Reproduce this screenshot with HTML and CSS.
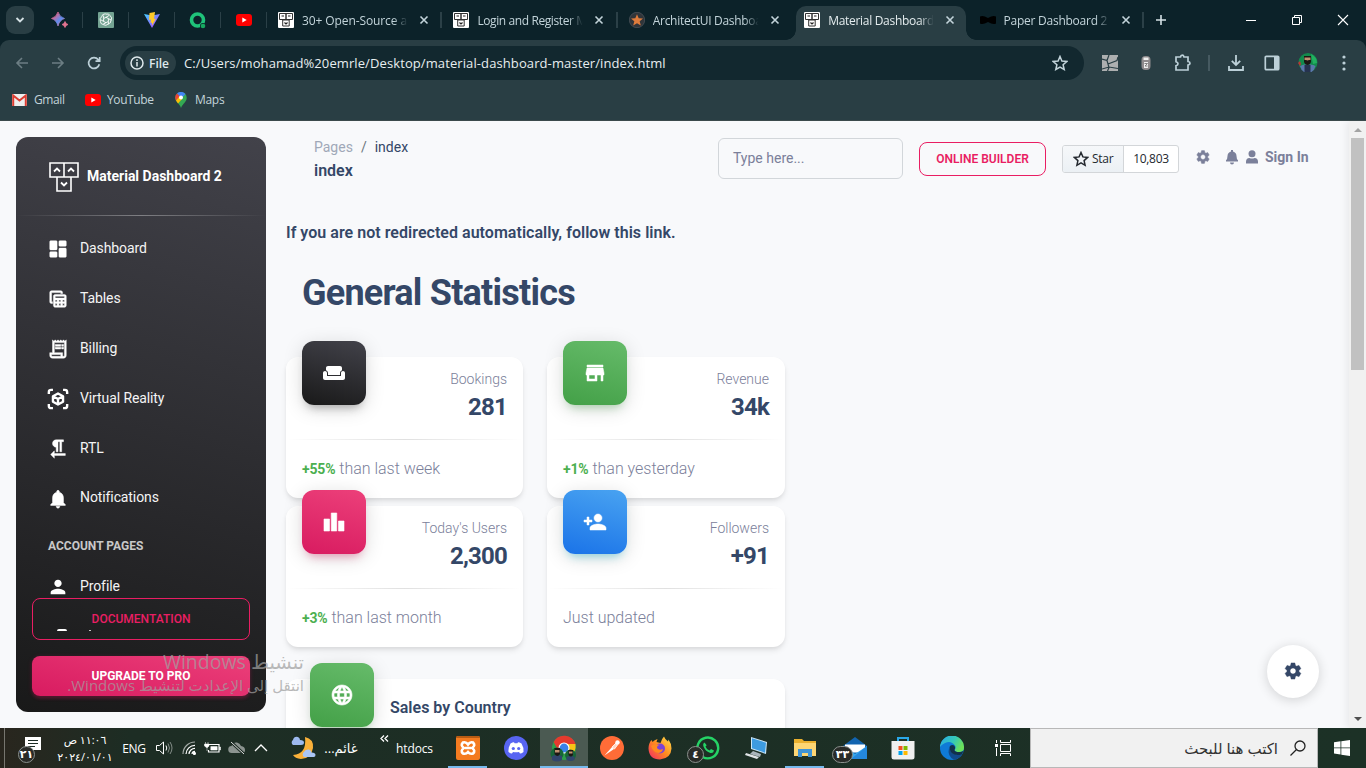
FILE: index.html
```html
<!DOCTYPE html>
<html lang="en">
<head>
<meta charset="utf-8">
<title>Material Dashboard 2</title>
<link rel="stylesheet" href="styles.css">
</head>
<body>
<svg class="defs" width="0" height="0">
  <defs>
    <linearGradient id="gSpark" x1="0" y1="0" x2="1" y2="1"><stop offset="0" stop-color="#e0607e"/><stop offset=".2" stop-color="#d9658c"/><stop offset=".5" stop-color="#5b8def"/><stop offset=".75" stop-color="#e57390"/></linearGradient>
    <linearGradient id="gVite" x1="0" y1="0" x2="1" y2="1"><stop offset="0" stop-color="#41d1ff"/><stop offset="1" stop-color="#bd34fe"/></linearGradient>
    <linearGradient id="gFox" x1="1" y1="0" x2="0" y2="1"><stop offset="0" stop-color="#ffe14d"/><stop offset=".5" stop-color="#ff8a1f"/><stop offset="1" stop-color="#f0246a"/></linearGradient>
    <linearGradient id="gEdge" x1="0" y1="0" x2="1" y2=".4"><stop offset="0" stop-color="#27a9e8"/><stop offset=".6" stop-color="#35c8b8"/><stop offset="1" stop-color="#6be05a"/></linearGradient>
    <symbol id="creative" viewBox="0 0 30 30"><g fill="none" stroke="currentColor" stroke-width="1.6"><path d="M1 1h14v14H1zM15 1h14v14H15zM8 15h14v14H8z"/><path d="M5 9.5l3-3 3 3M19 9.5l3-3 3 3M12 20.500l3 3 3-3" stroke-width="1.8"/></g></symbol>
    <symbol id="fav" viewBox="0 0 16 16"><rect width="16" height="16" rx="1" fill="#fff"/><path d="M1.500 1.500h6.500v6H1.500zM8 1.500h6.500v6H8zM4.700 8h6.500v6H4.700z" fill="none" stroke="#333"/><path d="M3.500 4h2.500M10 4h2.500M6.500 10.500L8 12l1.500-1.500" fill="none" stroke="#222" stroke-width="1.200"/></symbol>
    <symbol id="x" viewBox="0 0 10 10"><path d="M1.500 1.500l7 7M8.500 1.500l-7 7" stroke="currentColor" stroke-width="1.600" fill="none"/></symbol>
    <symbol id="yt" viewBox="0 0 16 12"><rect width="16" height="12" rx="3" fill="#f00"/><path d="M6.300 3.500v5l4.400-2.500z" fill="#fff"/></symbol>
    <symbol id="gear" viewBox="0 0 24 24"><path fill="currentColor" d="M19.140 12.940c.04-.3.06-.61.06-.94 0-.32-.02-.64-.07-.94l2.030-1.580c.18-.14.23-.41.12-.61l-1.920-3.320c-.12-.22-.37-.29-.59-.22l-2.390.96c-.5-.38-1.030-.7-1.620-.94l-.36-2.540c-.04-.24-.24-.41-.48-.41h-3.840c-.24 0-.43.17-.47.41l-.36 2.540c-.59.24-1.130.57-1.620.94l-2.390-.96c-.22-.08-.47 0-.59.22L2.740 8.870c-.12.21-.08.47.12.61l2.030 1.580c-.05.3-.09.63-.09.94s.02.64.07.94l-2.030 1.580c-.18.14-.23.41-.12.61l1.920 3.320c.12.22.37.29.59.22l2.390-.96c.5.38 1.030.7 1.620.94l.36 2.540c.05.24.24.41.48.41h3.840c.24 0 .44-.17.47-.41l.36-2.540c.59-.24 1.130-.56 1.620-.94l2.390.96c.22.08.47 0 .59-.22l1.920-3.320c.12-.22.07-.47-.12-.61l-2.010-1.580zM12 15.600c-1.980 0-3.600-1.620-3.600-3.600s1.620-3.600 3.600-3.600 3.600 1.620 3.600 3.600-1.620 3.600-3.600 3.600z" stroke="currentColor" stroke-width=".6"/></symbol>
    <symbol id="bell" viewBox="0 0 24 24"><path fill="currentColor" d="M12 22c1.100 0 2-.9 2-2h-4c0 1.100.89 2 2 2zm6-6v-5c0-3.070-1.640-5.640-4.500-6.320V4c0-.83-.67-1.500-1.500-1.500s-1.500.67-1.500 1.500v.68C7.630 5.360 6 7.920 6 11v5l-2 2v1h16v-1l-2-2z"/></symbol>
    <symbol id="person" viewBox="0 0 24 24"><path fill="currentColor" d="M12 12c2.210 0 4-1.790 4-4s-1.790-4-4-4-4 1.790-4 4 1.790 4 4 4zm0 2c-2.670 0-8 1.340-8 4v2h16v-2c0-2.660-5.330-4-8-4z"/></symbol>
  </defs>
</svg>

<header class="browser">
  <div class="tabstrip">
    <div class="tab-search"><svg width="10" height="8" viewBox="0 0 10 8"><path d="M1.500 2L5 5.500 8.500 2" fill="none" stroke="#d5e1e5" stroke-width="1.800"/></svg></div>
    <div class="pin"><svg width="18" height="18" viewBox="0 0 18 18"><path d="M7 1q1.500 5 6.500 6.500Q8.500 9 7 15 5.500 9 .5 7.500 5.500 6 7 1zM14 10.500q.8 2.500 3 3-2.200.5-3 3-.8-2.500-3-3 2.200-.5 3-3z" fill="url(#gSpark)" stroke="url(#gSpark)" stroke-width=".8"/></svg></div>
    <div class="pin"><svg width="16" height="16" viewBox="0 0 16 16"><rect width="16" height="16" rx="1" fill="#74a392"/><g fill="none" stroke="#fff" stroke-width=".9"><path d="M8 2.200q3-1.200 4.200 1.600 2.500 1.800.8 4.600 0 3-2.800 3.600-2.200 2.400-4.800.6-3-.4-3-3.200-1.200-3 1.200-4.600.6-3 3.600-3z"/><path d="M8 5.300l2.400 1.300v2.800L8 10.700 5.600 9.400V6.600zM5.600 6.600V3.500M8 5.300l3-1.800M10.400 6.600l3 1.600M10.400 9.400v3M8 10.700l-3 1.600M5.600 9.400L2.800 7.800"/></g></svg></div>
    <div class="pin"><svg width="16" height="16" viewBox="0 0 16 16"><path d="M0 2l8 14 8-14-8 1.500z" fill="url(#gVite)"/><path d="M11 0L5.500 1 5 8l2-.5L6.500 11l1.500-.5v3l4-7-2 .4z" fill="#ffc928"/></svg></div>
    <div class="pin"><svg width="17" height="17" viewBox="0 0 17 17"><circle cx="8.500" cy="8" r="6" fill="none" stroke="#1fc37a" stroke-width="3.600"/><circle cx="14" cy="14" r="3" fill="#0c2229"/><circle cx="14" cy="14" r="2.300" fill="#17a860"/></svg></div>
    <div class="pin"><svg width="16" height="12"><use href="#yt"/></svg></div>
    <div class="tab"><svg width="16" height="16"><use href="#fav"/></svg><span class="t t1">30+ Open-Source a</span><svg class="close" width="10" height="10"><use href="#x"/></svg></div>
    <div class="tab"><svg width="16" height="16"><use href="#fav"/></svg><span class="t t2">Login and Register M</span><svg class="close" width="10" height="10"><use href="#x"/></svg></div>
    <div class="tab nosep"><svg width="16" height="16" viewBox="0 0 16 16"><circle cx="8" cy="8" r="7.700" fill="#30353a" stroke="#596066" stroke-width=".6"/><path d="M8 2.200l1.700 4 4.300.3-3.300 2.800 1.100 4.200L8 11.200l-3.800 2.300 1.100-4.200L2 6.500l4.300-.3z" fill="#de7c3c"/></svg><span class="t t3">ArchitectUI Dashboa</span><svg class="close" width="10" height="10"><use href="#x"/></svg></div>
    <div class="tab active"><svg width="16" height="16"><use href="#fav"/></svg><span class="t t4">Material Dashboard</span><svg class="close" width="10" height="10"><use href="#x"/></svg></div>
    <div class="tab"><svg width="16" height="16" viewBox="0 0 16 16"><path d="M0 4.500q3-1.500 8 1.500 5-3 8-1.500v7q-3 1.500-8-1.500-5 3-8 1.500z" fill="#000"/></svg><span class="t t5">Paper Dashboard 2</span><svg class="close" width="10" height="10"><use href="#x"/></svg></div>
    <svg class="plus" width="12" height="12" viewBox="0 0 12 12"><path d="M6 1v10M1 6h10" stroke="#d5e1e5" stroke-width="1.600"/></svg>
    <div class="win">
      <svg width="12" height="12" viewBox="0 0 12 12"><path d="M1 6.500h10" stroke="#fff"/></svg>
      <svg width="12" height="12" viewBox="0 0 12 12" fill="none" stroke="#fff"><path d="M1.500 3.500h7v7h-7zM3.500 3.500v-2h7v7h-2"/></svg>
      <svg width="12" height="12" viewBox="0 0 12 12"><path d="M1 1l10 10M11 1L1 11" stroke="#fff" stroke-width="1.100"/></svg>
    </div>
  </div>
  <div class="toolbar">
    <div class="slot dim"><svg width="14" height="14" viewBox="0 0 14 14"><path d="M13 7H2M7 2L2 7l5 5" fill="none" stroke="currentColor" stroke-width="1.600"/></svg></div>
    <div class="slot dim"><svg width="14" height="14" viewBox="0 0 14 14"><path d="M1 7h11M7 2l5 5-5 5" fill="none" stroke="currentColor" stroke-width="1.600"/></svg></div>
    <div class="slot"><svg width="14" height="14" viewBox="0 0 14 14"><path d="M12.300 8.200A5.400 5.400 0 1 1 11.200 3.600L12.500 5M12.700 1v4.200H8.500" fill="none" stroke="currentColor" stroke-width="1.700"/></svg></div>
    <div class="omnibox">
      <div class="chip"><svg width="14" height="14" viewBox="0 0 14 14"><circle cx="7" cy="7" r="6" fill="none" stroke="#dfe9ec" stroke-width="1.500"/><path d="M7 6v4.500M7 3.300V5" stroke="#dfe9ec" stroke-width="1.500"/></svg><b>File</b></div>
      <span class="url">C:/Users/mohamad%20emrle/Desktop/material-dashboard-master/index.html</span>
      <svg class="bm" width="16" height="16" viewBox="0 0 16 16"><path d="M8 1.500l1.900 4.600 4.900.4-3.700 3.200 1.100 4.800L8 12l-4.200 2.500 1.100-4.800L1.200 6.500l4.900-.4z" fill="none" stroke="#c3d4da" stroke-width="1.500"/></svg>
    </div>
    <div class="slot"><svg width="16" height="16" viewBox="0 0 16 16"><rect width="16" height="16" fill="#adafb0"/><path d="M0 4l5 1.500 2 7L5.500 16M5 5.500L7 0M6 9l9-3.500L16 2M0 14l7-2 9 1.500" stroke="#293e44" fill="none" stroke-width="1.200"/></svg></div>
    <div class="slot"><svg width="10" height="16" viewBox="0 0 10 16"><rect x=".5" y="1" width="9" height="14" rx="4" fill="#8f8b8d"/><path d="M2.500 2.500h5v2.500h-5zM3 7h4v6H3z" fill="#eee"/><path d="M3.500 8.500h3L4 11h2.500" stroke="#666" fill="none" stroke-width=".8"/></svg></div>
    <div class="slot"><svg class="puzzle" width="18" height="18" viewBox="0 0 18 18"><path d="M2 3h4.500q.3-1.800 1.700-1.800T10 3h4v4.500q2 .3 2 1.700t-2 1.800v5H2v-4.300q2-.5 2-2t-2-2z" fill="none" stroke="currentColor" stroke-width="1.700"/></svg></div>
    <div class="divider"></div>
    <div class="slot"><svg width="18" height="18" viewBox="0 0 18 18"><path d="M9 1v9.500M4.800 6.800L9 11l4.200-4.200M2 12v4h14v-4" fill="none" stroke="currentColor" stroke-width="1.800"/></svg></div>
    <div class="slot"><svg width="16" height="16" viewBox="0 0 16 16"><rect x="1.300" y="1.300" width="13.400" height="13.400" rx="1" fill="none" stroke="currentColor" stroke-width="1.700"/><path d="M10 1h5v14h-5z" fill="currentColor"/></svg></div>
    <div class="slot"><svg width="20" height="20" viewBox="0 0 20 20"><circle cx="10" cy="9.500" r="9.500" fill="#128a4c"/><path d="M13 1q6 3 6 9l-4 1z" fill="#23b060"/><path d="M2 13q3-1.500 4.500-1.500h6q3 0 5 1.500-1 4-4 6H6q-3-2-4-6z" fill="#5a78ab"/><path d="M6.500 12h6v7h-6z" fill="#26334f"/><path d="M6 3h7v6q-1 3-3.500 3T6 9z" fill="#1c1714"/><path d="M6.500 4.500h6V7h-1.500q-1.500.8-3 0H6.500z" fill="#c09070"/><path d="M0 10l2-2 1 3-1 2z" fill="#b33"/></svg></div>
    <div class="slot"><svg width="4" height="16" viewBox="0 0 4 16" fill="currentColor"><circle cx="2" cy="2" r="1.600"/><circle cx="2" cy="8" r="1.600"/><circle cx="2" cy="14" r="1.600"/></svg></div>
  </div>
  <div class="bookmarks">
    <a class="b1"><svg width="15" height="12" viewBox="0 0 15 12"><rect width="15" height="12" rx="1" fill="#eee"/><path d="M1.200 12V1.500l6.300 5 6.300-5V12" fill="none" stroke="#dc3d32" stroke-width="2"/></svg><span>Gmail</span></a>
    <a class="b2"><svg width="16" height="12"><use href="#yt"/></svg><span>YouTube</span></a>
    <a class="b3"><svg width="12" height="16" viewBox="0 0 12 16"><path d="M6 0a5.700 5.700 0 0 1 5.700 5.700C11.700 10 8 11 6 16 4.500 11 .3 10 .3 5.700A5.700 5.700 0 0 1 6 0z" fill="#34a853"/><path d="M2 1.600A5.700 5.700 0 0 1 10.500 2L6 7z" fill="#4285f4"/><path d="M2 1.600L5 4.500 1 8.700Q-1 4.500 2 1.600z" fill="#ea4335"/><path d="M1 8.500L4 5l3 2-4 4.500z" fill="#fbbc04"/><circle cx="6" cy="5.600" r="2" fill="#fff"/></svg><span>Maps</span></a>
  </div>
</header>

<div class="page">
  <aside class="sidebar">
    <div class="brand"><svg width="30" height="30"><use href="#creative"/></svg><b>Material Dashboard 2</b></div>
    <hr>
    <nav>
      <a><svg class="mi" viewBox="0 0 24 24"><path d="M4 13h6q1 0 1-1V4q0-1-1-1H4Q3 3 3 4v8q0 1 1 1zm0 8h6q1 0 1-1v-4q0-1-1-1H4q-1 0-1 1v4q0 1 1 1zm10 0h6q1 0 1-1v-8q0-1-1-1h-6q-1 0-1 1v8q0 1 1 1zM13 4v4q0 1 1 1h6q1 0 1-1V4q0-1-1-1h-6q-1 0-1 1z"/></svg><span>Dashboard</span></a>
      <a><svg class="mi" viewBox="0 0 24 24"><path d="M19 7H9c-1.100 0-2 .9-2 2v10c0 1.100.9 2 2 2h10c1.100 0 2-.9 2-2V9c0-1.100-.9-2-2-2zm0 2v2H9V9h10zm-6 6v-2h2v2h-2zm2 2v2h-2v-2h2zm-4-2H9v-2h2v2zm6-2h2v2h-2v-2zm-8 4h2v2H9v-2zm8 2v-2h2v2h-2zM6 17H5c-1.100 0-2-.9-2-2V5c0-1.100.9-2 2-2h10c1.100 0 2 .9 2 2v1h-2V5H5v10h1v2z"/></svg><span>Tables</span></a>
      <a><svg class="mi" viewBox="0 0 24 24"><path d="M19.500 3.500L18 2l-1.500 1.500L15 2l-1.500 1.500L12 2l-1.500 1.500L9 2 7.500 3.500 6 2v14H3v3c0 1.660 1.340 3 3 3h12c1.660 0 3-1.340 3-3V2l-1.500 1.500zM15 20H6c-.55 0-1-.45-1-1v-1h10v2zm4-1c0 .55-.45 1-1 1s-1-.45-1-1v-3H8V5h11v14zM9 7h6v2H9zM16 7h2v2h-2zM9 10h6v2H9zM16 10h2v2h-2z"/></svg><span>Billing</span></a>
      <a><svg class="mi bare" viewBox="0 0 24 24"><g fill="none" stroke="#fff" stroke-width="2.600" stroke-linejoin="round"><path d="M2 6.500V4.500q0-2.500 2.500-2.500h2M17.500 2h2q2.500 0 2.500 2.500v2M22 17.500v2q0 2.500-2.500 2.500h-2M6.500 22h-2q-2.500 0-2.500-2.500v-2"/><path d="M12 6l5.500 3v6L12 18l-5.500-3V9zM6.500 9L12 12l5.500-3M12 12v6"/></g></svg><span>Virtual Reality</span></a>
      <a><svg class="mi" viewBox="0 0 24 24"><path d="M10 10v5h2V4h2v11h2V4h2V2h-8C7.790 2 6 3.790 6 6s1.790 4 4 4zm-2 7v-3l-4 4 4 4v-3h12v-2H8z"/></svg><span>RTL</span></a>
      <a><svg class="mi"><use href="#bell"/></svg><span>Notifications</span></a>
    </nav>
    <h6>ACCOUNT PAGES</h6>
    <a class="profile"><svg class="mi bare"><use href="#person"/></svg><span>Profile</span></a>
    <a class="btn-doc">DOCUMENTATION<i class="peek p1"></i><i class="peek p2"></i></a>
    <a class="btn-pro">UPGRADE TO PRO</a>
  </aside>

  <main>
    <div class="navbar">
      <div class="crumbs"><div><span class="muted">Pages</span><span class="slash">/</span><span>index</span></div><b>index</b></div>
      <div class="field">Type here...</div>
      <a class="builder">ONLINE BUILDER</a>
      <div class="gh"><span class="star"><svg width="16" height="16" viewBox="0 0 16 16"><path d="M8 1.500l1.900 4.400 4.700.5-3.500 3.200 1 4.700L8 11.900l-4.100 2.400 1-4.700L1.400 6.400l4.700-.5z" fill="none" stroke="#24292f" stroke-width="1.500"/></svg>Star</span><span class="count">10,803</span></div>
      <svg class="ni g" width="16" height="16"><use href="#gear"/></svg>
      <svg class="ni n" width="16" height="16" viewBox="0 0 16 16"><path d="M8 15.500a2 2 0 0 0 2-2H6a2 2 0 0 0 2 2zM9 2.500V1H7v1.500Q3.500 3.500 3.500 7 3.500 10 2 11.200V12.500h12v-1.300Q12.500 10 12.500 7 12.500 3.500 9 2.500z" fill="currentColor"/></svg>
      <svg class="ni u" width="14" height="16" viewBox="0 0 14 16"><circle cx="7" cy="4.700" r="3.500" fill="currentColor"/><path d="M1 14.500v-1.700q0-3.500 3.500-3.800 2.500 1 5 0 3.500.3 3.500 3.800v1.700z" fill="currentColor"/></svg>
      <b class="sign">Sign In</b>
    </div>
    <p class="redirect">If you are not redirected automatically, follow this link.</p>
    <h1>General Statistics</h1>
    <div class="cards">
      <section class="card"><div class="tile dark"><svg viewBox="0 0 24 24"><path d="M21 10c-1.100 0-2 .9-2 2v3H5v-3c0-1.100-.9-2-2-2s-2 .9-2 2v5c0 1.100.9 2 2 2h18c1.100 0 2-.9 2-2v-5c0-1.100-.9-2-2-2zm-3-5H6c-1.100 0-2 .9-2 2v2.150c1.160.41 2 1.510 2 2.820V14h12v-2.030c0-1.300.84-2.400 2-2.820V7c0-1.100-.9-2-2-2z"/></svg></div><div class="stat"><span>Bookings</span><b>281</b></div><hr><p><b>+55%</b> than last week</p></section>
      <section class="card"><div class="tile green"><svg viewBox="0 0 24 24"><path d="M20 4H4v2h16V4zm1 10v-2l-1-5H4l-1 5v2h1v6h10v-6h4v6h2v-6h1zm-9 4H6v-4h6v4z" stroke="#fff" stroke-width=".5"/></svg></div><div class="stat"><span>Revenue</span><b>34k</b></div><hr><p><b>+1%</b> than yesterday</p></section>
      <section class="card"><div class="tile pink"><svg viewBox="0 0 24 24"><path d="M7.500 21H2V9h5.500v12zm7.250-18h-5.500v18h5.500V3zM22 11h-5.500v10H22V11z" stroke="#fff" stroke-width=".6"/></svg></div><div class="stat"><span>Today's Users</span><b>2,300</b></div><hr><p><b>+3%</b> than last month</p></section>
      <section class="card"><div class="tile blue"><svg viewBox="0 0 24 24"><path d="M15 12c2.210 0 4-1.790 4-4s-1.790-4-4-4-4 1.790-4 4 1.790 4 4 4zm-9-2V7H4v3H1v2h3v3h2v-3h3v-2H6zm9 4c-2.670 0-8 1.340-8 4v2h16v-2c0-2.660-5.330-4-8-4z" stroke="#fff" stroke-width=".5"/></svg></div><div class="stat"><span>Followers</span><b>+91</b></div><hr><p>Just updated</p></section>
    </div>
    <section class="sales"><div class="tile green"><svg viewBox="0 0 24 24"><path d="M11.990 2C6.470 2 2 6.480 2 12s4.470 10 9.990 10C17.520 22 22 17.520 22 12S17.520 2 11.990 2zm6.930 6h-2.950c-.32-1.250-.78-2.450-1.380-3.560 1.840.63 3.370 1.910 4.330 3.560zM12 4.040c.83 1.200 1.480 2.530 1.910 3.960h-3.820c.43-1.430 1.080-2.760 1.910-3.960zM4.260 14C4.100 13.360 4 12.690 4 12s.1-1.360.26-2h3.380c-.08.66-.14 1.320-.14 2 0 .68.06 1.340.14 2H4.260zm.82 2h2.950c.32 1.250.78 2.450 1.380 3.560-1.840-.63-3.370-1.900-4.330-3.560zm2.950-8H5.080c.96-1.660 2.490-2.930 4.330-3.560C8.810 5.550 8.350 6.750 8.030 8zM12 19.960c-.83-1.200-1.480-2.530-1.910-3.960h3.820c-.43 1.430-1.080 2.760-1.910 3.960zM14.340 14H9.660c-.09-.66-.16-1.320-.16-2 0-.68.07-1.350.16-2h4.680c.09.65.16 1.320.16 2 0 .68-.07 1.340-.16 2zm.25 5.560c.6-1.110 1.060-2.310 1.380-3.560h2.950c-.96 1.650-2.490 2.930-4.330 3.560zM16.360 14c.08-.66.14-1.320.14-2 0-.68-.06-1.340-.14-2h3.380c.16.64.26 1.310.26 2s-.1 1.360-.26 2h-3.380z" stroke="#fff" stroke-width=".6"/></svg></div><h2>Sales by Country</h2></section>
  </main>

  <div class="scrollbar"><i class="up"></i><i class="thumb"></i><i class="down"></i></div>
  <div class="fab"><svg width="20" height="20"><use href="#gear"/></svg></div>
  <div class="watermark"><div class="w1" dir="rtl">تنشيط Windows</div><div class="w2" dir="rtl">انتقل إلى الإعدادت لتنشيط Windows.</div></div>
</div>

<footer class="taskbar">
  <div class="tk action"><svg width="30" height="28" viewBox="0 0 30 28"><path d="M8 3h16v13H12l-4 4z" fill="#fff"/><path d="M11 6.500h10M11 9.500h10M11 12.500h7" stroke="#1c2c24" /></svg><span class="badge">٢١</span></div>
  <div class="tk clock" dir="rtl"><span>١١:٠٦ ص</span><span class="date">٢٠٢٤/٠١/٠١</span></div>
  <div class="tk eng">ENG</div>
  <div class="tk s1"><svg width="18" height="16" viewBox="0 0 18 16" fill="none" stroke="#fff"><path d="M1.500 5.500h3l4-3.500v12l-4-3.500h-3z"/><path d="M11 5.500q1.500 2.500 0 5"/><path d="M13 3.500q3 4.500 0 9M15 2q4 6 0 12" opacity=".45"/></svg></div>
  <div class="tk s2"><svg width="14" height="14" viewBox="0 0 14 14" fill="none" stroke="#fff" stroke-width="1.200"><path d="M1 13A12 12 0 0 1 13 1" opacity=".6"/><path d="M4 13A9 9 0 0 1 13 4.300M7 13a6 6 0 0 1 6-5.700M10 13a3 3 0 0 1 3-2.700"/><circle cx="12.400" cy="12.400" r="1" fill="#fff"/></svg></div>
  <div class="tk s3"><svg width="17" height="14" viewBox="0 0 17 14"><path d="M5 3.500h10v7.500H4.500V9" fill="none" stroke="#fff" stroke-width="1.200"/><path d="M6.800 5.500h6.400v3.600H6.800zM15.500 6h1v3h-1zM1.500 1v2M4 1v2M.5 3h4.500v2L3.500 6.500h-1L.5 5zM3 6v4" fill="#fff" stroke="#fff" stroke-width=".5"/></svg></div>
  <div class="tk s4"><svg width="18" height="14" viewBox="0 0 18 14"><path d="M4 12a3.500 3.500 0 0 1-.5-7Q5 1 9 1.500q3 .5 4 3.500 4 .5 4 4t-3 3z" fill="#8b938f"/><path d="M3 1l13 12" stroke="#1c2c24" stroke-width="3"/><path d="M3 1l13 12" stroke="#ddd"/></svg></div>
  <div class="tk s5"><svg width="14" height="8" viewBox="0 0 14 8"><path d="M1 7l6-6 6 6" fill="none" stroke="#fff" stroke-width="1.300"/></svg></div>
  <div class="tk wx"><svg width="26" height="24" viewBox="0 0 26 24"><path d="M15 1q9 2 8 11-2 11-12 11-6-.5-8-4 14-1 12-18z" fill="#fbb13a"/><path d="M3 9a3 3 0 0 1 0-5q1-4 5-3 2 1 2 3 4 0 4 2.500T11 9z" fill="#9db9ef"/><path d="M14 21a3 3 0 0 1 0-5q1-3 5-2.500 2 .5 2.500 3 4 0 4 2.500T23 21z" fill="#abc5f5"/></svg></div>
  <div class="tk wt" dir="rtl">غائم...</div>
  <div class="tk chev"><svg width="9" height="7" viewBox="0 0 9 7"><path d="M4 .5l-3 3 3 3M8 .5l-3 3 3 3" fill="none" stroke="#fff" stroke-width="1.300"/></svg></div>
  <div class="tk ht">htdocs</div>
  <div class="tk app run"><svg width="24" height="24" viewBox="0 0 24 24"><rect width="24" height="24" rx="2" fill="#f47b20"/><path d="M0 2q0-2 2-2h20q2 0 2 2z" fill="#b85b13"/><path d="M7 6.500q3-1 5 2 2-3 5-2 3 3-1 5.500 4 2.500 1 5.500-3 1-5-1.500-2 2.500-5 1.500-3-3 1-5.500-4-2.500-1-5.500zM9 12h6" fill="none" stroke="#fff" stroke-width="2.600"/></svg></div>
  <div class="tk app"><svg width="24" height="24" viewBox="0 0 24 24"><circle cx="12" cy="12" r="12" fill="#5865f2"/><path d="M6.500 7.500Q9 6 10 6.200l.6 1h2.800l.6-1q1-.2 3.500 1.300 2.500 4 2 8.500-2 1.500-3.500 1.500L15 16q-3 .7-6 0l-1 1.500q-1.500 0-3.500-1.500-.5-4.500 2-8.500z" fill="#fff"/><circle cx="9.300" cy="12.500" r="1.600" fill="#5865f2"/><circle cx="14.700" cy="12.500" r="1.600" fill="#5865f2"/></svg></div>
  <div class="tk app run full"><svg width="28" height="28" viewBox="0 0 28 28"><circle cx="14" cy="14" r="12" fill="#2f9e4c"/><path d="M3.600 8A12 12 0 0 1 25.500 10H14l-6 6z" fill="#e53a2e"/><path d="M14 10h11.500q1 8-6 14l-4-3z" fill="#fbc116"/><circle cx="14" cy="14" r="5.500" fill="#fff"/><circle cx="14" cy="14" r="4.400" fill="#3b82ea"/><circle cx="7" cy="20" r="6.500" fill="#176638"/><circle cx="20.500" cy="21" r="5.500" fill="#176638"/><path d="M2 22q5-2 10 0v4q-5 3-10 0zM16.500 23q4-2 8 0v3q-4 2-8 0z" fill="#31456d"/><path d="M4.500 14h5.500v6q-2.500 4-5.500 0zM18.500 16h4.500v5q-2 3-4.500 0z" fill="#1c1714"/><path d="M5 16h4.500v2.500H5zM19 17.500h3.500v2H19z" fill="#c09070"/></svg></div>
  <div class="tk app"><svg width="24" height="24" viewBox="0 0 24 24"><circle cx="12" cy="12" r="12" fill="#ff6c37"/><path d="M4.500 19.500l7.500-8.500 2 2z" fill="#fff"/><path d="M12 11l4-4 1.500 2-3 4z" fill="#ffd5c5" stroke="#fff" stroke-width=".8"/><circle cx="17.500" cy="6.500" r="2.200" fill="#fff"/></svg></div>
  <div class="tk app"><svg width="24" height="24" viewBox="0 0 24 24"><path d="M12 23.500q-11 0-11.500-11 0-5 3-8.500l1 2q2-2 5-3l-1 3 4 1q1-4 3.500-6.500 1 3 4 5l.5-2q3 4 3 9-.5 10-11.500 11z" fill="url(#gFox)"/><circle cx="12" cy="12.500" r="5" fill="#7b42d6"/><path d="M3 10q3-3 9-1-3 0-3 3 2 3 6 1-1 4-5 4-5-1-7-7z" fill="#ff8a1f"/></svg></div>
  <div class="tk app"><svg width="24" height="24" viewBox="0 0 24 24"><path d="M1.500 22.500L3 17.500a10.400 10.400 0 1 1 3.700 3.500z" fill="none" stroke="#25d366" stroke-width="2.400"/><path d="M8.500 6.500q-2 1-1 4 2 5 7 6.500 3 .5 3.500-2.500l-3-1.500-1.500 1.500q-3-1-4-4l1.200-1.300z" fill="#25d366"/></svg><span class="badge wa">٤</span></div>
  <div class="tk app pc"><svg width="24" height="24" viewBox="0 0 24 24"><path d="M6 1l16 5-1 12-15-5z" fill="#cde7f7"/><path d="M7 2.200l14 4.500-1 10L7 12.200z" fill="#3d9be0"/><path d="M8 15l8 3-1 3-10-3z" fill="#a9b4ba"/><path d="M1 17l13 4-2 2-12-4z" fill="#dfe4e6"/></svg></div>
  <div class="tk app run"><svg width="22" height="20" viewBox="0 0 22 20"><path d="M0 1h8l2 2h12v15H0z" fill="#eab02e"/><path d="M0 5h22v13H0z" fill="#fdd673"/><path d="M4 19v-8h14v8h-4v-4H8v4z" fill="#3f94d6"/></svg></div>
  <div class="tk app mail"><svg width="26" height="24" viewBox="0 0 26 24"><path d="M2 10L14 1l12 9v12H2z" fill="#1264b0"/><path d="M4 8.500h20v8H4z" fill="#fff"/><path d="M2 10l12 8 12-8v13H2z" fill="#35a8ef"/><path d="M26 10L10 23h16z" fill="#2488dc"/></svg><span class="badge ml">٣٣</span></div>
  <div class="tk app store"><svg width="24" height="24" viewBox="0 0 24 24"><path d="M7 6V2h10v4" fill="none" stroke="#2aa9ea" stroke-width="2"/><path d="M.500 5h23v16q0 2.500-2.500 2.500H3Q.5 23.500.5 21z" fill="#f0f0f0"/><path d="M7.500 10h4v4h-4z" fill="#f25022"/><path d="M12.500 10h4v4h-4z" fill="#7fba00"/><path d="M7.500 15h4v4h-4z" fill="#00a4ef"/><path d="M12.500 15h4v4h-4z" fill="#ffb900"/></svg></div>
  <div class="tk app edge"><svg width="24" height="24" viewBox="0 0 24 24"><circle cx="12" cy="12" r="12" fill="#0f7ad6"/><path d="M9 12q-2 8 5 11.800 5-.8 8-5Q13 20 9 12z" fill="#114a8b"/><path d="M0 11A12 12 0 0 1 24 12q0 4-5 4-4 0-4.500-2 2-2 .5-4.500Q11 4 5 7 1 9 0 11z" fill="url(#gEdge)"/><path d="M9.500 12q0-3 3-3 2 0 2.500 2 .3 1.500-.5 3 .5 2.500 6 2 2-.3 3-1.500l-1.500 4Q11 21 9.500 12z" fill="#12304a"/></svg></div>
  <div class="tk view"><svg width="16" height="16" viewBox="0 0 16 16" fill="none" stroke="#fff"><path d="M5.500 0v2.500h10V0M5.500 16v-2.500h10V16M5.500 4.500h10v7h-10zM1.500 0v3M1.500 8v8" /><path d="M0 4h3v3H0z" fill="#fff" stroke="none"/></svg></div>
  <div class="search"><span dir="rtl">اكتب هنا للبحث</span><svg width="16" height="16" viewBox="0 0 16 16" fill="none" stroke="#222" stroke-width="1.300"><circle cx="10" cy="6" r="5"/><path d="M6.500 9.500L.5 15.500"/></svg></div>
  <div class="tk start"><svg width="16" height="16" viewBox="0 0 16 16" fill="#fff"><path d="M0 2.200l6.500-.9v6.200H0zM7.300 1.200L16 0v7.500H7.300zM0 8.300h6.500v6.200L0 13.600zM7.300 8.300H16V16l-8.700-1.200z"/></svg></div>
</footer>
</body>
</html>
```
FILE: styles.css
```css
* { box-sizing: border-box; }
body { margin: 0; width: 1366px; height: 768px; overflow: hidden; display: flex; flex-direction: column; font-family: Roboto, sans-serif; }
svg { display: block; flex: none; }
.defs { position: absolute; }

/* Browser chrome */
.browser { height: 121px; background: #0c2229; font-family: "Open Sans", sans-serif; color: #c3d4da; flex: none; }
.tabstrip { height: 40px; display: flex; align-items: center; }
.tab-search { width: 28px; height: 28px; margin: 0 3px 0 6px; border-radius: 9px; background: #293e44; display: flex; align-items: center; justify-content: center; }
.pin { width: 46px; height: 16px; display: flex; align-items: center; justify-content: center; border-right: 1.500px solid #2b4047; }
.tab { width: 175.400px; height: 40px; padding-left: 11px; display: flex; align-items: center; position: relative; }
.tab::after { content: ""; position: absolute; right: 0; top: 12px; height: 16px; width: 2px; background: #2b4047; }
.tab.nosep::after { display: none; }
.tab .t { width: 109px; margin-left: 8px; overflow: hidden; white-space: nowrap; font-size: 12px; letter-spacing: -.1px; -webkit-mask-image: linear-gradient(90deg, #000 84%, transparent 97%); mask-image: linear-gradient(90deg, #000 84%, transparent 97%); }
.tab .t2 { letter-spacing: -.4px; }
.tab .t3, .tab .t4 { letter-spacing: -.3px; }
.tab .t5 { letter-spacing: -.25px; }
.tab .close { margin-left: 8px; color: #c3d4da; }
.tab.active { color: #e4ecee; z-index: 1; }
.tab.active::before { content: ""; position: absolute; z-index: -1; left: 3px; right: 3px; top: 6px; bottom: 0; border-radius: 10px 10px 0 0; background: #293e44; }
.tab.active::after { left: -7px; right: -7px; width: auto; top: auto; bottom: 0; height: 10px; background: radial-gradient(circle at 0 0, transparent 9.500px, #293e44 10px) left / 10px 10px no-repeat, radial-gradient(circle at 100% 0, transparent 9.500px, #293e44 10px) right / 10px 10px no-repeat; }
.plus { margin-left: 11px; }
.win { margin-left: auto; margin-right: 17px; display: flex; gap: 34px; }
.toolbar { height: 46px; padding-left: 4px; background: #293e44; border-radius: 9px 9px 0 0; display: flex; align-items: center; }
.slot { width: 36px; display: flex; justify-content: center; color: #bcd0d8; }
.slot.dim { color: #6c7e84; }
.puzzle { margin-left: 2px; }
.omnibox { width: 964px; height: 34px; margin: 0 8px; border-radius: 17px; background: #12282f; display: flex; align-items: center; padding-left: 5px; }
.chip { width: 51px; height: 24px; border-radius: 12px; background: #293e44; display: flex; align-items: center; padding-left: 5px; gap: 5px; font-size: 12px; color: #dfe9ec; }
.chip b { font-weight: 600; }
.url { margin-left: 8px; font-size: 13px; letter-spacing: .1px; color: #e8eef0; white-space: nowrap; }
.bm { margin-left: auto; margin-right: 16px; }
.divider { width: 2px; height: 16px; margin: 0 8px; background: #465a61; }
.bookmarks { height: 35px; padding: 0 0 7px 12px; background: #293e44; border-bottom: 1px solid #3b4a4c; display: flex; align-items: center; font-size: 12px; }
.bookmarks a { display: flex; align-items: center; gap: 7px; }
.bookmarks span { letter-spacing: -.4px; }
.b1 { width: 73px; }
.b2 { width: 90px; }
.bookmarks .b2 { gap: 6px; }
.bookmarks .b3 { gap: 8px; }
.bookmarks .b3 span { letter-spacing: -.3px; }

/* Page */
.page { height: 607px; position: relative; overflow: hidden; display: flex; background: #f8f9fb; flex: none; }
.sidebar { width: 250px; height: 575px; margin: 16px 20px 0 16px; border-radius: 12px; background: linear-gradient(195deg, #42424a, #191919); color: #fff; display: flex; flex-direction: column; flex: none; }
.brand { height: 78px; padding-left: 33px; display: flex; align-items: center; gap: 8px; font-size: 14px; }
.brand svg { margin-top: 1px; }
.sidebar hr { width: 100%; height: 1px; margin: 0; border: 0; background: linear-gradient(90deg, transparent, rgba(255,255,255,.35), transparent); }
.sidebar nav { padding-top: 7px; }
.sidebar nav a { height: 50px; padding-left: 31px; display: flex; align-items: center; gap: 11px; font-size: 14px; }
.sidebar nav span, .profile span { margin-top: -1px; color: #f4f4f4; letter-spacing: -.1px; }
.sidebar nav a:last-child span { margin-top: -3px; }
.mi { width: 22px; height: 22px; fill: #fff; stroke: #fff; stroke-width: .5; margin-top: 2px; }
.mi.bare { stroke: none; }
.sidebar h6 { margin: 15px 0 0 32px; height: 16px; font-size: 12px; line-height: 16px; font-weight: 700; color: #c8c8c8; }
.profile { height: 48px; padding: 16px 0 0 31px; display: flex; align-items: center; gap: 11px; font-size: 14px; }
.btn-doc, .btn-pro { margin: 0 16px; height: 42px; width: 218px; border-radius: 8px; display: flex; align-items: center; justify-content: center; font-size: 12px; font-weight: 700; flex: none; }
.btn-doc { margin-top: -4px; border: 1px solid #e91e63; color: #e91e63; position: relative; font-weight: 500; }
.btn-pro { margin-top: 16px; height: 40px; background: linear-gradient(195deg, #ec407a, #d81b60); box-shadow: 0 3px 3px rgba(233,30,99,.15), 0 1px 5px rgba(233,30,99,.2); }
.peek { position: absolute; top: 30px; height: 2px; background: #fff; border-radius: 2px 2px 0 0; }
.p1 { left: 24px; width: 10px; }
.p2 { left: 56px; width: 2px; top: 31px; height: 1px; }
main { width: 1047px; padding: 17px 0 0; color: #344767; flex: none; }
.navbar { height: 41px; padding-left: 28px; display: flex; align-items: center; }
.crumbs { width: 404px; font-size: 14px; align-self: flex-start; }
.crumbs div { line-height: 18px; height: 22px; }
.crumbs b { font-size: 16px; line-height: 22px; font-weight: 600; display: block; }
.muted { color: #a0a8b8; }
.slash { margin: 0 8px; color: #6c757d; }
.field { width: 185px; height: 41px; padding-left: 14px; border: 1px solid #d2d6da; border-radius: 6px; line-height: 38px; font-size: 14px; color: #7b809a; }
.builder { width: 127px; height: 34px; margin-left: 16px; border: 1px solid #e91e63; border-radius: 8px; color: #e91e63; font-size: 12px; font-weight: 600; display: flex; align-items: center; justify-content: center; }
.gh { width: 117px; height: 28px; margin-left: 16px; border: 1px solid #d3d6d9; border-radius: 3px; background: #fff; color: #24292f; display: flex; align-items: center; font: 12px "Open Sans", sans-serif; letter-spacing: -.3px; overflow: hidden; }
.star { width: 61px; height: 28px; padding-left: 10px; display: flex; align-items: center; gap: 3px; border-right: 1px solid #d3d6d9; background: linear-gradient(#f6f8fa, #ebf0f4); }
.count { flex: 1; text-align: center; }
.ni { color: #7b809a; margin-top: -3px; }
.g { margin-left: 16px; }
.n { margin-left: 13px; }
.u { margin-left: 5px; }
.sign { margin: -3px 0 0 6px; font-size: 14px; color: #7b809a; white-space: nowrap; }
.redirect { margin: 44px 0 0; font-size: 16px; line-height: 20px; font-weight: 600; letter-spacing: .035px; }
h1 { margin: 26px 0 0 16px; font-size: 36px; line-height: 48px; font-weight: 700; letter-spacing: -.77px; }
.cards { margin-top: 40px; display: grid; grid-template-columns: 237px 238px; gap: 8px 24px; }
.card { height: 141px; padding: 0 16px; background: #fff; border-radius: 12px; box-shadow: 0 4px 6px -1px rgba(0,0,0,.1), 0 2px 4px -1px rgba(0,0,0,.06); display: grid; grid-template-columns: 64px 1fr; grid-template-rows: 82px 1px 58px; }
.tile { width: 64px; height: 64px; margin-top: -16px; border-radius: 12px; display: flex; align-items: center; justify-content: center; }
.tile svg { width: 24px; height: 24px; fill: #fff; }
.dark { background: linear-gradient(195deg, #42424a, #191919); box-shadow: 0 4px 20px rgba(0,0,0,.14), 0 7px 10px -5px rgba(64,64,64,.4); }
.green { background: linear-gradient(195deg, #66bb6a, #43a047); box-shadow: 0 4px 20px rgba(0,0,0,.14), 0 7px 10px -5px rgba(76,175,80,.4); }
.pink { background: linear-gradient(195deg, #ec407a, #d81b60); box-shadow: 0 4px 20px rgba(0,0,0,.14), 0 7px 10px -5px rgba(233,30,99,.4); }
.blue { background: linear-gradient(195deg, #49a3f1, #1a73e8); box-shadow: 0 4px 20px rgba(0,0,0,.14), 0 7px 10px -5px rgba(0,188,212,.4); }
.stat { text-align: right; padding-top: 12px; }
.stat span { display: block; font-size: 14px; line-height: 20px; font-weight: 300; color: #7b809a; }
.stat b { display: block; font-size: 24px; line-height: 36px; letter-spacing: -.8px; }
.card hr { grid-column: 1 / 3; width: 237px; height: 1px; margin: 0 -16px; border: 0; background: linear-gradient(90deg, transparent, rgba(0,0,0,.12), transparent); }
.card p { grid-column: 1 / 3; margin: 0; padding-top: 16px; font-size: 16px; line-height: 25px; font-weight: 300; color: #7b809a; letter-spacing: -.02px; }
.card p b { font-size: 14px; font-weight: 700; letter-spacing: -.15px; color: #4caf50; }
.sales { width: 499px; height: 80px; margin-top: 32px; padding-left: 24px; border-radius: 12px; background: #fff; box-shadow: 0 4px 6px -1px rgba(0,0,0,.1), 0 2px 4px -1px rgba(0,0,0,.06); display: flex; }
.sales h2 { margin: 18px 0 0 16px; font-size: 16px; line-height: 22px; font-weight: 600; }
.scrollbar { width: 17px; margin-left: auto; background: #f1f1f1; box-shadow: -2px 0 8px rgba(0,0,0,.07); display: flex; flex-direction: column; align-items: center; flex: none; }
.up { border: 4px solid transparent; border-bottom-color: #a3a3a3; margin-top: 3px; height: 5px; }
.thumb { width: 13px; height: 232px; background: #c1c1c1; margin-top: 6px; }
.down { border: 4px solid transparent; border-top-color: #505050; margin-top: auto; margin-bottom: 3px; height: 8px; }
.fab { position: absolute; left: 1267px; top: 524px; width: 52px; height: 53px; border-radius: 50%; background: #fff; color: #344767; box-shadow: 0 2px 12px rgba(0,0,0,.16); display: flex; align-items: center; justify-content: center; }
.fab svg { margin-top: -1px; }
.watermark { position: absolute; left: 44px; top: 525px; width: 260px; color: rgba(160,160,160,.72); font-family: "Open Sans", "DejaVu Sans", sans-serif; white-space: nowrap; }
.watermark div { text-align: right; }
.w1 { font-size: 19.500px; line-height: 31px; }
.w2 { font-size: 15px; line-height: 16px; }

/* Taskbar */
.taskbar { height: 40px; display: flex; background: linear-gradient(90deg, #29261e 0, #1d2d24 130px, #1c3126 100%); color: #fff; font-family: "Open Sans", "DejaVu Sans", sans-serif; flex: none; }
.tk { display: flex; align-items: center; justify-content: center; position: relative; white-space: nowrap; font-size: 12px; flex: none; }
.action { width: 47px; margin-left: 4px; border-left: 1px solid #77766f; padding-left: 8px; }
.badge { position: absolute; left: 13px; top: 18px; width: 17px; height: 17px; border: 1px solid #8b918e; border-radius: 9px; background: #292b28; font: bold 11px/15px "DejaVu Sans", sans-serif; text-align: center; }
.badge.wa { left: 3px; }
.badge.ml { left: 3px; width: 21px; }
.clock { width: 66px; margin-left: 1px; flex-direction: column; line-height: 17px; font-size: 11px; }
.clock .date { font-size: 11px; letter-spacing: -.8px; }
.eng { width: 32px; letter-spacing: -.3px; }
.s1 { width: 27px; }
.s2 { width: 24px; }
.s3 { width: 23px; }
.s4 { width: 25px; }
.s5 { width: 23px; }
.wx { width: 42px; margin-left: 10px; }
.wt { width: 40px; margin-left: -3px; font-size: 13px; }
.chev { width: 18px; margin-left: 14px; padding-bottom: 19px; }
.ht { width: 43px; margin-right: 8px; letter-spacing: -.15px; }
.app { width: 48px; }
.run::after { content: ""; position: absolute; left: 4px; right: 5px; bottom: 0; height: 2px; background: #76b9ed; }
.full { background: #4b5a52; }
.full::after { left: 0; right: 0; }
.pc, .mail { width: 49px; }
.store { width: 50px; }
.view { width: 54px; }
.search { width: 288px; height: 40px; border: 1px solid #b8b8b8; background: #f1f1f1; color: #333; display: flex; align-items: center; justify-content: flex-end; gap: 12px; padding-right: 11px; font-size: 15px; margin-left: auto; }
.start { width: 48px; }
```
